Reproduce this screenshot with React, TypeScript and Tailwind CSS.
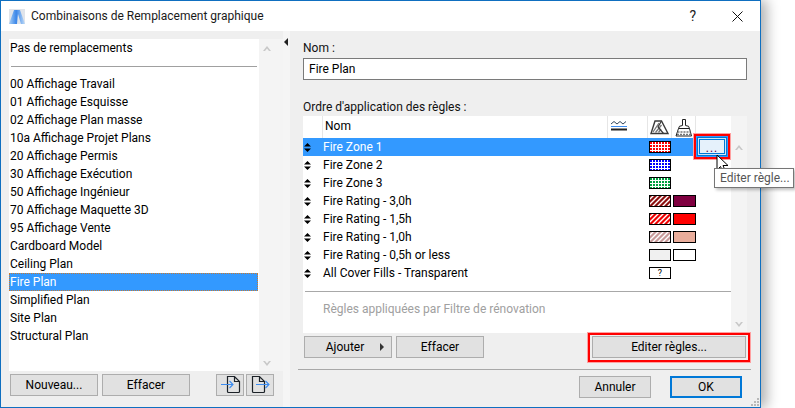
import React from "react";

const F = "font-['Roboto','Noto_Sans',sans-serif]";

function Btn({ children, className = "", border = "border border-[#adadad]" }: { children?: React.ReactNode; className?: string; border?: string }) {
  return (
    <div className={`h-[22px] flex items-center justify-center ${border} bg-[#e1e1e1] text-[12px] text-black ${className}`}>
      {children}
    </div>
  );
}

function Swatch({ fill, pattern }: { fill?: string; pattern?: string }) {
  return (
    <svg width="22" height="12" className="block shrink-0">
      <rect x="0" y="0" width="22" height="12" fill={fill ?? "#fff"} />
      {pattern && <rect x="0" y="0" width="22" height="12" fill={`url(#${pattern})`} />}
      <rect x="0.5" y="0.5" width="21" height="11" fill="none" stroke="#000" />
    </svg>
  );
}

function Solid({ color }: { color: string }) {
  return <div className="w-[23px] h-[12px] border border-black" style={{ backgroundColor: color }} />;
}

function Updown() {
  return (
    <svg width="7" height="9" viewBox="0 0 7 9" className="block">
      <path d="M3.5 0 L7 3.5 H0 Z M0 5.5 H7 L3.5 9 Z" fill="#000" />
    </svg>
  );
}

const rules: { name: string; a: React.ReactNode; b?: React.ReactNode }[] = [
  { name: "Fire Zone 1", a: <Swatch pattern="dotRed" /> },
  { name: "Fire Zone 2", a: <Swatch pattern="dotBlue" /> },
  { name: "Fire Zone 3", a: <Swatch pattern="dotGreen" /> },
  { name: "Fire Rating - 3,0h", a: <Swatch fill="#8c0f0f" pattern="hatchW" />, b: <Solid color="#7f0040" /> },
  { name: "Fire Rating - 1,5h", a: <Swatch fill="#f00000" pattern="hatchW" />, b: <Solid color="#ff0000" /> },
  { name: "Fire Rating - 1,0h", a: <Swatch fill="#c99a9a" pattern="hatchW" />, b: <Solid color="#e9ad9b" /> },
  { name: "Fire Rating - 0,5h or less", a: <Swatch fill="#f0f0f0" />, b: <Solid color="#ffffff" /> },
];

const items = [
  "00 Affichage Travail",
  "01 Affichage Esquisse",
  "02 Affichage Plan masse",
  "10a Affichage Projet Plans",
  "20 Affichage Permis",
  "30 Affichage Exécution",
  "50 Affichage Ingénieur",
  "70 Affichage Maquette 3D",
  "95 Affichage Vente",
  "Cardboard Model",
  "Ceiling Plan",
  "Fire Plan",
  "Simplified Plan",
  "Site Plan",
  "Structural Plan",
];

function Chevron({ up }: { up?: boolean }) {
  return (
    <svg width="8" height="5" viewBox="0 0 8 5" className="block">
      <path d={up ? "M0 5 L4 0 L8 5 L6 5 L4 2.5 L2 5 Z" : "M0 0 L4 5 L8 0 L6 0 L4 2.5 L2 0 Z"} fill="#c8c8c8" />
    </svg>
  );
}

function DocIcon({ out }: { out?: boolean }) {
  return (
    <svg width="24" height="20" viewBox="0 0 24 20" className="block">
      <path
        d={out ? "M4.5 1.5 H11.5 L16.5 6.5 V16.5 Q16.5 17.5 15.5 17.5 H5.5 Q4.5 17.5 4.5 16.5 Z M11.5 1.5 V6.5 H16.5" : "M9.5 1.5 H16.5 L21.5 6.5 V16.5 Q21.5 17.5 20.5 17.5 H10.5 Q9.5 17.5 9.5 16.5 Z M16.5 1.5 V6.5 H21.5"}
        fill="none"
        stroke="#1c2228"
        strokeWidth="1.2"
      />
      <path d={out ? "M8 9.5 H21 M17.5 6 L21 9.5 L17.5 13" : "M3 9.5 H15 M11.5 6 L15 9.5 L11.5 13"} fill="none" stroke="#3c8cf0" strokeWidth="1.1" />
    </svg>
  );
}

function Dots({ id, color }: { id: string; color: string }) {
  return (
    <pattern id={id} width="3" height="3" patternUnits="userSpaceOnUse">
      <rect width="3" height="3" fill="#fff" />
      <rect x="1" y="1" width="2" height="2" fill={color} />
    </pattern>
  );
}

export default function App() {
  return (
    <div className={`relative w-[795px] h-[408px] bg-white overflow-hidden ${F} text-[12px] text-black`}>
      <svg width="0" height="0" className="absolute">
        <defs>
          <Dots id="dotRed" color="#ff0000" />
          <Dots id="dotBlue" color="#0000ff" />
          <Dots id="dotGreen" color="#00a040" />
          <pattern id="hatchW" width="5" height="5" patternUnits="userSpaceOnUse">
            <path d="M-1 6 L6 -1 M-1 1 L1 -1 M4 6 L6 4" stroke="#fff" strokeWidth="1.4" />
          </pattern>
        </defs>
      </svg>

      <div className="w-[761px] h-[408px] border border-[#0f6fc0] bg-[#efefef] flex flex-col shadow-[6px_0_12px_rgba(0,0,0,0.3)]">
        {/* title bar */}
        <div className="h-[30px] bg-white flex items-center shrink-0">
          <svg width="16" height="15" viewBox="0 0 16 15" className="ml-[8px] block">
            <defs>
              <linearGradient id="tg" x1="0" y1="0" x2="1" y2="0">
                <stop offset="0" stopColor="#a8d0f8" />
                <stop offset="0.45" stopColor="#3b86e8" />
                <stop offset="1" stopColor="#c0dcf8" />
              </linearGradient>
            </defs>
            <rect width="16" height="15" fill="#e0e4ea" />
            <path d="M0 15 L5 1 H11 L16 15 H12 L9 5 L8 15 Z" fill="url(#tg)" />
          </svg>
          <span className="ml-[6px] text-[12px] text-[#1a1a1a]">Combinaisons de Remplacement graphique</span>
          <span className="ml-auto mr-[36px] text-[14px] leading-none text-[#222]">?</span>
          <svg width="11" height="11" viewBox="0 0 11 11" className="mr-[17px] block">
            <path d="M0.5 0.5 L10.5 10.5 M10.5 0.5 L0.5 10.5" stroke="#111" />
          </svg>
        </div>

        <div className="flex flex-1 min-h-0">
          {/* left panel */}
          <div className="w-[282px] shrink-0 pl-[8px] pt-[8px] flex flex-col">
            <div className="h-[332px] flex">
              <div className="w-[250px] bg-white flex flex-col">
                <div className="h-[18px] pl-[1px] leading-[18px]">Pas de remplacements</div>
                <div className="h-[18px] flex items-center px-[2px]">
                  <div className="h-px w-full bg-[#a0a0a0]" />
                </div>
                {items.map((t) => (
                  <div
                    key={t}
                    className={
                      t === "Fire Plan"
                        ? "h-[18px] leading-[16px] w-[249px] bg-[#3399ff] text-white border border-dotted border-[#c87a30]"
                        : "h-[18px] pl-[1px] leading-[18px]"
                    }
                  >
                    {t}
                  </div>
                ))}
              </div>
              <div className="w-[24px] bg-[#f4f4f4] flex flex-col justify-between items-start pl-[4px] pt-[7px] pb-[5px]">
                <Chevron up />
                <Chevron />
              </div>
            </div>
            <div className="flex mt-[3px] pl-[1px]">
              <Btn className="w-[88px]">Nouveau...</Btn>
              <Btn className="w-[88px] ml-[4px]">Effacer</Btn>
              <Btn className="w-[28px] ml-[26px]"><DocIcon /></Btn>
              <Btn className="w-[28px] ml-[2px]"><DocIcon out /></Btn>
            </div>
          </div>

          {/* splitter */}
          <div className="w-[7px] shrink-0 bg-[#f5f5f5] pt-[7px] pl-[1px]">
            <svg width="4" height="8" viewBox="0 0 4 8" className="block">
              <path d="M4 0 V8 L0 4 Z" fill="#222" />
            </svg>
          </div>

          {/* right panel */}
          <div className="flex-1 min-w-0 flex flex-col">
            <div className="pl-[13px] pr-[12px]">
              <div className="h-[17px] mt-[9px] leading-[17px] text-[#111]">Nom :</div>
              <div className="h-[22px] mt-[1px] w-[444px] border border-[#7a7a7a] bg-white pl-[5px] leading-[20px]">Fire Plan</div>
              <div className="h-[17px] mt-[18px] leading-[18px] text-[#111]">Ordre d'application des règles :</div>
              <div className="h-[217px] mt-[1px] flex w-[444px]">
                <div className="w-[428px] bg-white flex flex-col">
                  {/* header */}
                  <div className="h-[22px] flex items-stretch">
                    <div className="w-[19px] shrink-0" />
                    <div className="w-[285px] shrink-0 border-l border-[#e6e6e6] pl-[2px] leading-[21px]">Nom</div>
                    <div className="w-[40px] shrink-0 border-l border-[#e6e6e6] flex pl-[3px] pt-[4px]">
                      <svg width="16" height="12" viewBox="0 0 16 12" className="block">
                        <path d="M0 4 L3 1.5 L6 4 L9 1.5 L12 4 L15 1.5" fill="none" stroke="#33475c" />
                        <rect x="0" y="6" width="16" height="1" fill="#3c8cf0" />
                        <rect x="0" y="8.5" width="16" height="2" fill="#222" />
                      </svg>
                    </div>
                    <div className="w-[24px] shrink-0 border-l border-[#e6e6e6] flex items-center justify-center">
                      <svg width="19" height="15" viewBox="0 0 19 15" className="block">
                        <path d="M5 1 H11.5 L18 13.5 H1 Z" fill="#fff" stroke="#3a3a3a" strokeWidth="1.4" />
                        <path d="M3 12 L9 3 M5.5 12.5 L11.5 5 M8.5 12.5 L11 9" stroke="#777" strokeWidth="1.3" />
                        <path d="M11.5 1 L8 7 L13.5 13.5" fill="none" stroke="#3a3a3a" strokeWidth="1.2" />
                      </svg>
                    </div>
                    <div className="w-[24px] shrink-0 border-l border-[#e6e6e6] flex items-start justify-center pt-[3px]">
                      <svg width="18" height="18" viewBox="0 0 18 18" className="block">
                        <path d="M7.5 0.5 H10.5 V6.5 Q14.5 6.5 14.5 9.5 H3.5 Q3.5 6.5 7.5 6.5 Z" fill="#fff" stroke="#222" />
                        <path d="M3.5 9.5 H14.5 L16.5 17 H1 Z" fill="#fff" stroke="#222" />
                        <path d="M2.5 13 H15.5 M2 15.5 H16" stroke="#777" strokeWidth="1.5" strokeDasharray="2 1" />
                      </svg>
                    </div>
                    <div className="flex-1 border-l border-[#e6e6e6]" />
                  </div>
                  {/* rows */}
                  {rules.map((r, i) => (
                    <div key={r.name} className={`h-[18px] flex items-center ${i === 0 ? "bg-[#3399ff]" : ""}`}>
                      <div className="w-[20px] shrink-0 pl-[1px]"><Updown /></div>
                      <div className={`w-[326px] shrink-0 ${i === 0 ? "text-white" : ""}`}>{r.name}</div>
                      {r.a}
                      <div className="w-[2px]" />
                      {r.b}
                    </div>
                  ))}
                  <div className="h-[18px] flex items-center">
                    <div className="w-[20px] shrink-0 pl-[1px]"><Updown /></div>
                    <div className="w-[326px] shrink-0">All Cover Fills - Transparent</div>
                    <div className="w-[22px] h-[12px] border border-black flex items-center justify-center text-[9px] leading-none">?</div>
                  </div>
                  <div className="h-[9px]" />
                  <div className="h-px ml-[2px] bg-[#a8a8a8]" />
                  <div className="pl-[20px] mt-[9px] leading-[17px] text-[#a0a0a0]">Règles appliquées par Filtre de rénovation</div>
                </div>
                <div className="flex-1 bg-[#f4f4f4] flex flex-col justify-between items-center pt-[29px] pb-[6px]">
                  <Chevron up />
                  <Chevron />
                </div>
              </div>
              <div className="flex mt-[3px] pl-[1px] w-[444px]">
                <Btn className="w-[88px] relative pr-[6px]">
                  Ajouter
                  <svg width="4" height="8" viewBox="0 0 4 8" className="absolute right-[7px] top-[6px] block">
                    <path d="M0 0 V8 L4 4 Z" fill="#333" />
                  </svg>
                </Btn>
                <Btn className="w-[88px] ml-[4px]">Effacer</Btn>
                <Btn className="w-[154px] ml-auto mr-[1px]">Editer règles...</Btn>
              </div>
            </div>
            <div className="h-px mt-[11px] ml-[8px] mr-[9px] bg-[#a8a8a8]" />
            <div className="flex justify-end mt-[6px] pr-[18px]">
              <Btn className="w-[72px]">Annuler</Btn>
              <Btn className="w-[72px] ml-[19px]" border="border-2 border-[#0078d7]">OK</Btn>
            </div>
          </div>
        </div>
      </div>

      {/* overlays */}
      <div className="absolute left-[694px] top-[134px] w-[36px] h-[25px] border-2 border-[#ff0000] shadow-[0_0_0_1px_#ffa0a0] bg-[#3399ff] p-[1px]">
        <div className="w-full h-full border border-[#0078d7] bg-[#cfe6fa] p-[1px]">
          <div className="w-full h-full border border-[#0078d7] bg-[#e5f1fb] flex items-end justify-center">
            <span className="text-[12px] leading-[9px] tracking-[1px] text-[#600040]">...</span>
          </div>
        </div>
      </div>
      <div className="absolute left-[588px] top-[333px] w-[162px] h-[29px] border-2 border-[#ff0000] shadow-[0_0_0_1px_#ffa0a0]" />
      <svg width="14" height="21" viewBox="0 0 14 21" className="absolute left-[716px] top-[154px] block">
        <path d="M1 1 V16 L4.5 12.5 L7 18.5 L9.5 17.5 L7 11.5 H12 Z" fill="#fff" stroke="#000" />
      </svg>
      <div className="absolute left-[714px] top-[168px] w-[80px] h-[20px] border border-[#767676] bg-white text-[12px] text-[#555] leading-[18px] pl-[5px] whitespace-nowrap shadow-[2px_2px_3px_rgba(0,0,0,0.25)]">
        Editer règle...
      </div>
      <svg width="8" height="8" viewBox="0 0 8 8" className="absolute left-[751px] top-[398px] block">
        <path d="M6 0h2v2H6zM3 3h2v2H3zM6 3h2v2H6zM0 6h2v2H0zM3 6h2v2H3zM6 6h2v2H6z" fill="#b8b8b8" />
      </svg>
    </div>
  );
}
